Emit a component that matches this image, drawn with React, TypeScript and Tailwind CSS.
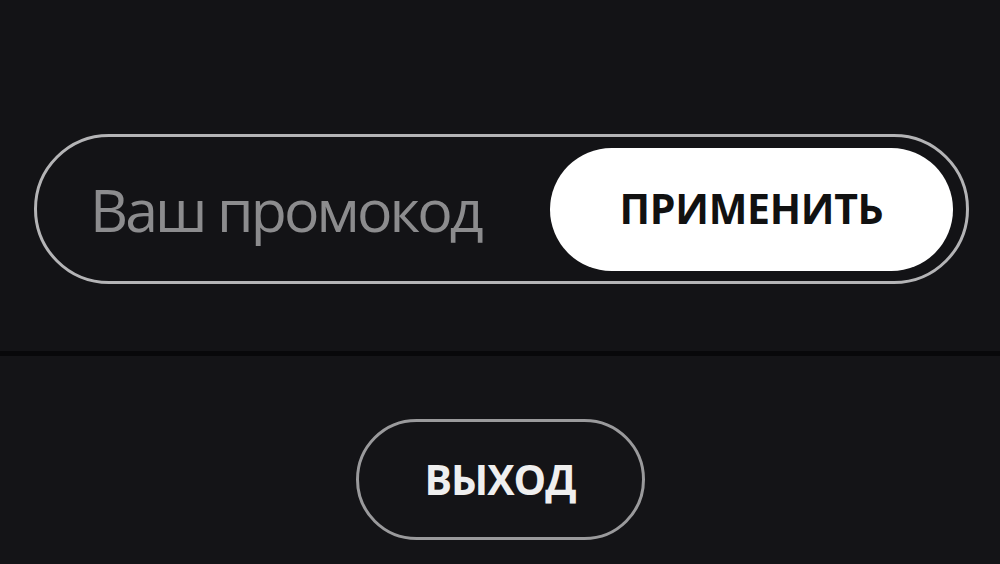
export default function App() {
  return (
    <div
      className="w-[1000px] h-[564px] flex flex-col bg-[#131316] overflow-hidden"
      style={{ fontFamily: '"Open Sans", "Noto Sans", sans-serif' }}
    >
      {/* Promo code row */}
      <div className="h-[351px] pt-[134px] px-[31px] bg-[#131316]">
        <div className="h-[150px] w-[935px] ml-[3px] flex items-center rounded-full border-[3px] border-[#b4b4b6] pl-[53px] pr-[13px]">
          <input
            placeholder="Ваш промокод"
            className="flex-1 min-w-0 bg-transparent outline-none text-[59px] text-[#d8d8d8] placeholder:text-[#8c8c8e] tracking-[-2.9px]"
          />
          <button className="h-[123px] w-[403px] shrink-0 rounded-full bg-white text-[#111] text-[41px] font-bold tracking-[-0.3px]">
            ПРИМЕНИТЬ
          </button>
        </div>
      </div>

      <div className="h-[5px] bg-[#08080a]" />

      {/* Logout */}
      <div className="flex-1 flex justify-center pt-[63px] bg-[#141417]">
        <button className="h-[121px] w-[289px] rounded-full border-[3px] border-[#9a9a9c] text-[41px] font-bold text-[#efefef] tracking-[-1px]">
          ВЫХОД
        </button>
      </div>
    </div>
  );
}
